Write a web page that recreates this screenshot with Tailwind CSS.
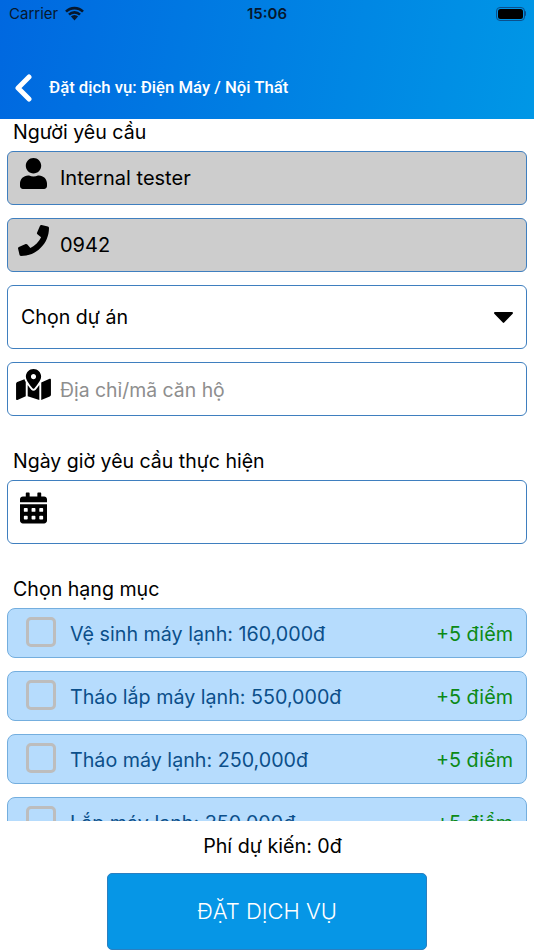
<!DOCTYPE html>
<html lang="en">
<head>
    <meta charset="UTF-8">
    <meta name="viewport" content="width=device-width, initial-scale=1.0">
    <title>Đặt dịch vụ</title>
    <script src="https://cdn.jsdelivr.net/npm/@tailwindcss/browser@4"></script>
</head>
<body class="bg-white text-black font-['Inter',sans-serif]">
<div class="w-[534px] h-[950px] flex flex-col overflow-hidden">

    <!-- HEADER -->
    <header class="h-[119px] shrink-0 flex flex-col bg-[linear-gradient(100deg,#0068e0,#0097e6)]">
        <div class="h-[28px] flex items-center justify-between pl-[9px] pr-[8px] pt-[1px] relative">
            <div class="flex items-center gap-[7px]">
                <span class="text-[15px] text-[#06182e]">Carrier</span>
                <svg class="w-[19px] h-[15px] -mt-[3px]" viewBox="0 0 19 14">
                    <path d="M1 5.2a12 12 0 0 1 17 0M4 8.1a7.8 7.8 0 0 1 11 0M6.8 10.9a3.8 3.8 0 0 1 5.4 0" fill="none" stroke="#06182e" stroke-width="2.6"/>
                    <path d="M7.4 11.6l2.1 2.4 2.1-2.4a3 3 0 0 0-4.2 0z" fill="#06182e"/>
                </svg>
            </div>
            <span class="absolute left-0 right-0 text-center text-[15px] font-semibold text-[#06182e]">15:06</span>
            <div class="flex items-center -mt-[2px]">
                <div class="w-[29px] h-[14px] rounded-[4px] border border-[#0a4f8c] p-[1px]">
                    <div class="w-full h-full rounded-[2.5px] bg-black"></div>
                </div>
                <div class="w-[1.5px] h-[5px] bg-[#0a4f8c] rounded-r-sm"></div>
            </div>
        </div>
        <div class="flex items-center mt-[46px] pl-[14px]">
            <svg class="w-[18px] h-[28px]" viewBox="0 0 18 28">
                <path d="M15 3L4 14l11 11" fill="none" stroke="#fff" stroke-width="5" stroke-linecap="round" stroke-linejoin="round"/>
            </svg>
            <span class="ml-[17px] text-[16.7px] font-medium text-white font-['Roboto',sans-serif]">Đặt dịch vụ: Điện Máy / Nội Thất</span>
        </div>
    </header>

    <!-- FORM -->
    <main class="flex-1 min-h-0 overflow-hidden px-[7px]">
        <p class="pl-[6px] h-[32px] text-[19.6px] leading-[26px]">Người yêu cầu</p>

        <div class="h-[54px] flex items-start bg-[#cdcdcd] border border-[#3f7fbf] rounded-[6px]">
            <div class="w-[50px] h-[31px] mt-[6px] mr-[2px] flex justify-center shrink-0">
                <svg class="h-[31px] w-[27px]" viewBox="0 0 448 512"><path d="M224 256c70.7 0 128-57.3 128-128S294.7 0 224 0 96 57.3 96 128s57.3 128 128 128zm89.6 32h-16.7c-22.2 10.2-46.9 16-72.9 16s-50.6-5.8-72.9-16h-16.7C60.2 288 0 348.2 0 422.4V464c0 26.5 21.5 48 48 48h352c26.5 0 48-21.5 48-48v-41.6c0-74.2-60.2-134.4-134.4-134.4z"/></svg>
            </div>
            <span class="text-[20px] leading-[52px]">Internal tester</span>
        </div>

        <div class="h-[54px] mt-[13px] flex items-start bg-[#cdcdcd] border border-[#3f7fbf] rounded-[6px]">
            <div class="w-[50px] h-[31px] mt-[6px] mr-[2px] flex justify-center shrink-0">
                <svg class="h-[31px] w-[31px]" viewBox="0 0 512 512"><path d="M493.4 24.6l-104-24c-11.3-2.6-22.9 3.3-27.5 13.9l-48 112c-4.2 9.8-1.4 21.3 6.9 28l60.6 49.6c-36 76.7-98.9 140.5-177.2 177.2l-49.6-60.6c-6.8-8.3-18.2-11.1-28-6.9l-112 48C3.9 366.5-2 378.1.6 389.4l24 104C27.1 504.2 36.7 512 48 512c256.1 0 464-207.5 464-464 0-11.2-7.7-20.9-18.6-23.4z"/></svg>
            </div>
            <span class="text-[20px] leading-[52px]">0942</span>
        </div>

        <div class="h-[64px] mt-[13px] flex items-center justify-between pl-[13px] pr-[13px] border border-[#3f7fbf] rounded-[6px]">
            <span class="text-[19.6px] mt-[1px]">Chọn dự án</span>
            <svg class="w-[19px] h-[11px]" viewBox="0 0 19 11"><path d="M1 0h17a1 1 0 0 1 .7 1.7L10.2 10.6a1 1 0 0 1-1.4 0L.3 1.7A1 1 0 0 1 1 0z"/></svg>
        </div>

        <div class="h-[54px] mt-[13px] flex items-start border border-[#3f7fbf] rounded-[6px]">
            <div class="w-[50px] h-[31px] mt-[6px] mr-[2px] flex justify-center shrink-0">
                <svg class="h-[31px] w-[35px]" viewBox="0 0 576 512"><path d="M288 0c-69.59 0-126 56.41-126 126 0 56.26 82.35 158.8 113.9 196.02 6.39 7.54 17.82 7.54 24.2 0C331.65 284.8 414 182.26 414 126 414 56.41 357.59 0 288 0zm0 168c-23.2 0-42-18.8-42-42s18.8-42 42-42 42 18.8 42 42-18.8 42-42 42zM20.12 215.95A32.006 32.006 0 0 0 0 245.66v250.32c0 11.32 11.43 19.06 21.94 14.86L160 448V214.92c-8.84-15.98-16.07-31.54-21.25-46.42L20.12 215.95zM288 359.67c-14.07 0-27.38-6.18-36.51-16.96-19.66-23.2-40.57-49.62-59.49-76.72V448l192 64V265.99c-18.92 27.09-39.82 53.52-59.49 76.72-9.13 10.77-22.44 16.96-36.51 16.96zm266.06-198.51L416 224v288l139.88-55.95A31.996 31.996 0 0 0 576 426.34V176.02c0-11.32-11.43-19.06-21.94-14.86z"/></svg>
            </div>
            <span class="text-[19.4px] leading-[54px] text-[#8e8e8e]">Địa chỉ/mã căn hộ</span>
        </div>

        <p class="pl-[6px] mt-[31px] h-[33px] text-[19.5px] leading-[28px]">Ngày giờ yêu cầu thực hiện</p>

        <div class="h-[64px] flex items-start border border-[#3f7fbf] rounded-[6px]">
            <div class="w-[50px] h-[32px] mt-[11px] flex justify-center shrink-0">
                <svg class="h-[32px] w-[27px]" viewBox="0 0 448 512"><path d="M0 464c0 26.5 21.5 48 48 48h352c26.5 0 48-21.5 48-48V192H0v272zm320-196c0-6.6 5.4-12 12-12h40c6.6 0 12 5.4 12 12v40c0 6.6-5.4 12-12 12h-40c-6.6 0-12-5.4-12-12v-40zm0 128c0-6.6 5.4-12 12-12h40c6.6 0 12 5.4 12 12v40c0 6.6-5.4 12-12 12h-40c-6.6 0-12-5.4-12-12v-40zM192 268c0-6.6 5.4-12 12-12h40c6.6 0 12 5.4 12 12v40c0 6.6-5.4 12-12 12h-40c-6.6 0-12-5.4-12-12v-40zm0 128c0-6.6 5.4-12 12-12h40c6.6 0 12 5.4 12 12v40c0 6.6-5.4 12-12 12h-40c-6.6 0-12-5.4-12-12v-40zM64 268c0-6.6 5.4-12 12-12h40c6.6 0 12 5.4 12 12v40c0 6.6-5.4 12-12 12H76c-6.6 0-12-5.4-12-12v-40zm0 128c0-6.6 5.4-12 12-12h40c6.6 0 12 5.4 12 12v40c0 6.6-5.4 12-12 12H76c-6.6 0-12-5.4-12-12v-40zM400 64h-48V16c0-8.8-7.2-16-16-16h-32c-8.8 0-16 7.2-16 16v48H160V16c0-8.8-7.2-16-16-16h-32c-8.8 0-16 7.2-16 16v48H48C21.5 64 0 85.5 0 112v48h448v-48c0-26.5-21.5-48-48-48z"/></svg>
            </div>
        </div>

        <p class="pl-[6px] mt-[31px] h-[33px] text-[19.6px] leading-[28px]">Chọn hạng mục</p>

        <div class="flex flex-col gap-[13px]">
            <div class="h-[50px] shrink-0 flex items-center bg-[#b6dcfd] border border-[#74aede] rounded-[8px] pl-[18px] pr-[13px]">
                <div class="w-[30px] h-[30px] -mt-[2px] shrink-0 border-[3px] border-[#bdbdbd] rounded-[5px]"></div>
                <span class="ml-[14px] mt-[3px] flex-1 text-[19.7px] text-[#0b4f8a]">Vệ sinh máy lạnh: 160,000đ</span>
                <span class="mt-[3px] text-[19.8px] text-[#0b8a16]">+5 điểm</span>
            </div>
            <div class="h-[50px] shrink-0 flex items-center bg-[#b6dcfd] border border-[#74aede] rounded-[8px] pl-[18px] pr-[13px]">
                <div class="w-[30px] h-[30px] -mt-[2px] shrink-0 border-[3px] border-[#bdbdbd] rounded-[5px]"></div>
                <span class="ml-[14px] mt-[3px] flex-1 text-[19.7px] text-[#0b4f8a]">Tháo lắp máy lạnh: 550,000đ</span>
                <span class="mt-[3px] text-[19.8px] text-[#0b8a16]">+5 điểm</span>
            </div>
            <div class="h-[50px] shrink-0 flex items-center bg-[#b6dcfd] border border-[#74aede] rounded-[8px] pl-[18px] pr-[13px]">
                <div class="w-[30px] h-[30px] -mt-[2px] shrink-0 border-[3px] border-[#bdbdbd] rounded-[5px]"></div>
                <span class="ml-[14px] mt-[3px] flex-1 text-[19.7px] text-[#0b4f8a]">Tháo máy lạnh: 250,000đ</span>
                <span class="mt-[3px] text-[19.8px] text-[#0b8a16]">+5 điểm</span>
            </div>
            <div class="h-[50px] shrink-0 flex items-center bg-[#b6dcfd] border border-[#74aede] rounded-[8px] pl-[18px] pr-[13px]">
                <div class="w-[30px] h-[30px] -mt-[2px] shrink-0 border-[3px] border-[#bdbdbd] rounded-[5px]"></div>
                <span class="ml-[14px] mt-[3px] flex-1 text-[19.7px] text-[#0b4f8a]">Lắp máy lạnh: 350,000đ</span>
                <span class="mt-[3px] text-[19.8px] text-[#0b8a16]">+5 điểm</span>
            </div>
        </div>
    </main>

    <!-- FOOTER -->
    <footer class="h-[129px] shrink-0 flex flex-col items-center bg-white">
        <p class="mt-[11px] h-[28px] ml-[11px] text-[19.7px] leading-[28px]">Phí dự kiến: 0đ</p>
        <button class="mt-[13px] w-[320px] h-[77px] bg-[#0696e6] border border-[#2a7fc0] rounded-[5px] text-white text-[22px] font-light">ĐẶT DỊCH VỤ</button>
    </footer>
</div>
</body>
</html>
